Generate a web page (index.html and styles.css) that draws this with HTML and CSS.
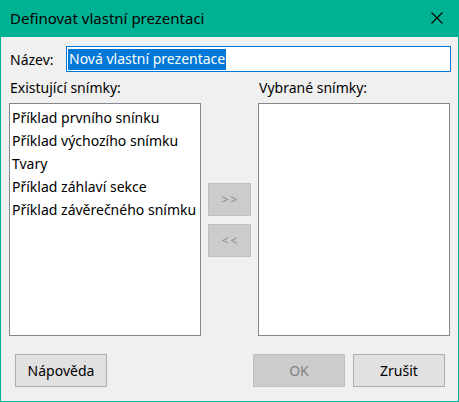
FILE: index.html
```html
<!DOCTYPE html>
<html lang="cs">
<head>
<meta charset="utf-8">
<title>Definovat vlastní prezentaci</title>
<link rel="stylesheet" href="styles.css">
</head>
<body>
<div class="window">
  <div class="titlebar">
    <span class="title">Definovat vlastní prezentaci</span>
    <svg class="close" width="12" height="12" viewBox="0 0 12 12"><path d="M0.5 0.5 L11.5 11.5 M11.5 0.5 L0.5 11.5" stroke="#000" stroke-width="1.1" fill="none"/></svg>
  </div>
  <div class="content">
    <div class="name-row">
      <label class="name-label">Název:</label>
      <div class="name-input"><span class="sel">Nová vlastní prezentace</span></div>
    </div>
    <div class="lists">
      <div class="col">
        <div class="col-label">Existující snímky:</div>
        <div class="listbox">
          <div class="item">Příklad prvního snínku</div>
          <div class="item">Příklad výchozího snímku</div>
          <div class="item">Tvary</div>
          <div class="item">Příklad záhlaví sekce</div>
          <div class="item">Příklad závěrečného snímku</div>
        </div>
      </div>
      <div class="mid">
        <div class="arrow-btn">&gt;&gt;</div>
        <div class="arrow-btn">&lt;&lt;</div>
      </div>
      <div class="col">
        <div class="col-label">Vybrané snímky:</div>
        <div class="listbox"></div>
      </div>
    </div>
    <div class="buttons">
      <div class="btn">Nápověda</div>
      <div class="spacer"></div>
      <div class="btn disabled">OK</div>
      <div class="btn">Zrušit</div>
    </div>
  </div>
</div>
</body>
</html>
```
FILE: styles.css
```css
* { box-sizing: border-box; }
html, body { margin: 0; padding: 0; }
body {
  font-family: "Noto Sans", "Open Sans", sans-serif;
  font-size: 14px;
  color: #000;
  background: #f0f0f0;
}
.window {
  width: 459px;
  height: 402px;
  border: 1px solid #00b294;
  border-top: 0;
  background: #f0f0f0;
  display: flex;
  flex-direction: column;
}
.titlebar {
  height: 37px;
  margin: 0 -1px;
  background: #00b294;
  display: flex;
  align-items: center;
  padding: 0 16px 1px 10px;
}
.title {
  flex: 1;
  font-size: 15px;
  color: #000;
}
.close { display: block; }
.content {
  flex: 1;
  padding: 9px 7px 0 8px;
  display: flex;
  flex-direction: column;
}
.name-row {
  display: flex;
  align-items: center;
  height: 26px;
}
.name-label {
  width: 57px;
  padding-left: 1px;
}
.name-input {
  flex: 1;
  height: 26px;
  border: 1px solid #0078d7;
  background: #fff;
  padding: 2px 0 0 1px;
}
.sel {
  display: inline-block;
  background: #0078d7;
  color: #fff;
  height: 21px;
  line-height: 20px;
  padding: 0 1px;
}
.lists {
  display: flex;
}
.col {
  width: 192px;
  display: flex;
  flex-direction: column;
}
.col-label {
  height: 31px;
  line-height: 31px;
  padding-left: 1px;
}
.listbox {
  height: 233px;
  border: 1px solid #828790;
  background: #fff;
  padding: 2px 0 0 2px;
}
.item {
  height: 23px;
  line-height: 23px;
  white-space: nowrap;
}
.mid {
  width: 57px;
  display: flex;
  flex-direction: column;
  align-items: center;
  padding-top: 111px;
  gap: 8px;
}
.arrow-btn {
  width: 43px;
  height: 33px;
  background: #cccccc;
  border: 1px solid #bfbfbf;
  color: #8a8a8a;
  font-size: 12px;
  letter-spacing: 2px;
  display: flex;
  align-items: center;
  justify-content: center;
  padding-left: 2px;
}
.buttons {
  display: flex;
  margin-top: 18px;
  padding: 0 6px 0 6px;
  gap: 8px;
}
.spacer { flex: 1; }
.btn {
  width: 92px;
  height: 33px;
  background: #e1e1e1;
  border: 1px solid #adadad;
  display: flex;
  align-items: center;
  justify-content: center;
}
.btn.disabled {
  background: #cccccc;
  border-color: #bfbfbf;
  color: #838383;
}
```
